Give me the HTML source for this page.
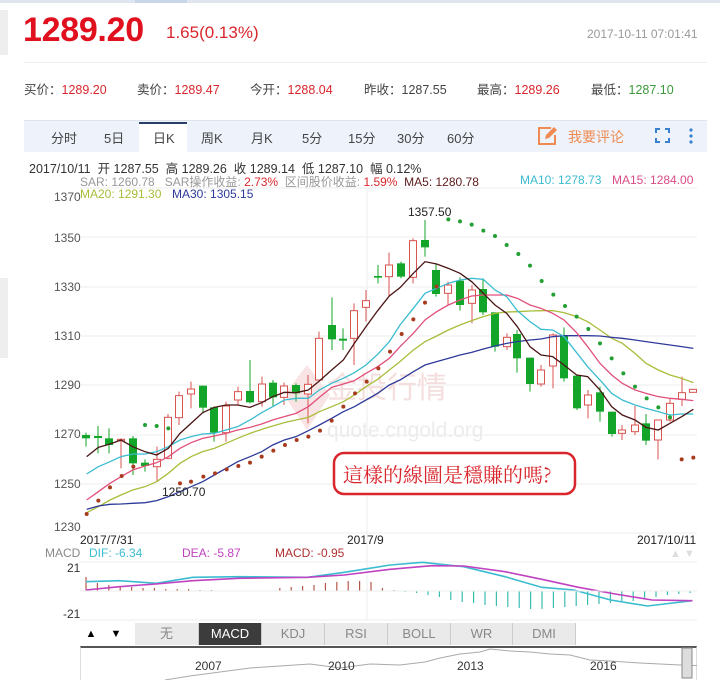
<!DOCTYPE html>
<html><head><meta charset="utf-8">
<style>
*{margin:0;padding:0;box-sizing:border-box}
body{width:720px;height:680px;background:#fff;font-family:"Liberation Sans","Noto Sans CJK SC",sans-serif;position:relative;overflow:hidden;color:#333}
.a{position:absolute;white-space:nowrap}
.r{color:#d9262c}.g{color:#3a9a3a}
.tab{position:absolute;top:128px;font-size:13px;color:#444}
.bt{position:absolute;top:623px;height:22px;width:46px;background:#eaeaea;border-right:1px solid #ccc;font-size:13px;color:#888;text-align:center;line-height:22px}
</style></head><body>
<div class="a" style="left:0;top:0;width:720px;height:3px;background:#dfe6f0"></div>
<div class="a" style="left:135px;top:0;width:52px;height:3px;background:#c8d6ea"></div>
<div class="a" style="left:0;top:10px;width:8px;height:45px;background:#eee"></div>
<div class="a" style="left:0;top:278px;width:8px;height:80px;background:#eee"></div>
<div class="a" style="left:23px;top:11px;font-size:34px;font-weight:bold;color:#e0101e;letter-spacing:-0.3px">1289.20</div>
<div class="a" style="left:166px;top:23px;font-size:17px;color:#d9262c">1.65(0.13%)</div>
<div class="a" style="left:587px;top:27px;font-size:12px;color:#999">2017-10-11 07:01:41</div>
<div class="a" style="left:24px;top:62px;width:683px;height:1px;background:#eee"></div>
<div class="a" style="left:24px;top:79px;font-size:12.5px;color:#444">买价：<span class="r">1289.20</span></div>
<div class="a" style="left:137px;top:79px;font-size:12.5px;color:#444">卖价：<span class="r">1289.47</span></div>
<div class="a" style="left:250px;top:79px;font-size:12.5px;color:#444">今开：<span class="r">1288.04</span></div>
<div class="a" style="left:364px;top:79px;font-size:12.5px;color:#444">昨收：1287.55</div>
<div class="a" style="left:477px;top:79px;font-size:12.5px;color:#444">最高：<span class="r">1289.26</span></div>
<div class="a" style="left:591px;top:79px;font-size:12.5px;color:#444">最低：<span class="g">1287.10</span></div>
<div class="a" style="left:24px;top:120px;width:683px;height:32px;background:#eef3fb;border-top:1px solid #dde4ef"></div>
<div class="a" style="left:139px;top:122px;width:48px;height:31px;background:#fff;border-top:2px solid #2a3f66"></div>
<div class="tab" style="left:51px">分时</div><div class="tab" style="left:104px">5日</div><div class="tab" style="left:153px">日K</div><div class="tab" style="left:201px">周K</div><div class="tab" style="left:251px">月K</div><div class="tab" style="left:302px">5分</div><div class="tab" style="left:348px">15分</div><div class="tab" style="left:397px">30分</div><div class="tab" style="left:447px">60分</div>
<svg class="a" style="left:537px;top:126px" width="22" height="20" viewBox="0 0 22 20"><path d="M14 2H2v16h16V9" fill="none" stroke="#ef8a52" stroke-width="2"/><path d="M8 13l1-4 8-8 3 3-8 8z" fill="#ef8a52"/></svg>
<div class="a" style="left:568px;top:127px;font-size:14px;color:#ef8a52">我要评论</div>
<svg class="a" style="left:655px;top:128px" width="15" height="15"><path d="M1 5V1h4M10 1h4v4M14 10v4h-4M5 14H1v-4" fill="none" stroke="#3a7fd0" stroke-width="2"/></svg>
<svg class="a" style="left:688px;top:127px" width="6" height="18"><circle cx="3" cy="3" r="1.6" fill="#3a7fd0"/><circle cx="3" cy="9" r="1.6" fill="#3a7fd0"/><circle cx="3" cy="15" r="1.6" fill="#3a7fd0"/></svg>
<div class="a" style="left:29px;top:158px;font-size:12.5px;color:#333">2017/10/11 &nbsp;开 1287.55 &nbsp;高 1289.26 &nbsp;收 1289.14 &nbsp;低 1287.10 &nbsp;幅 0.12%</div>
<div class="a" style="left:80px;top:173px;font-size:12px;color:#999">SAR: 1260.78 &nbsp;&nbsp;SAR操作收益: <span class="r">2.73%</span> &nbsp;区间股价收益: <span class="r">1.59%</span> &nbsp;<span style="color:#5a1a1a">MA5: 1280.78</span></div>
<div class="a" style="left:520px;top:173px;font-size:12px;color:#3bbcd0">MA10: 1278.73</div>
<div class="a" style="left:612px;top:173px;font-size:12px;color:#d94c86">MA15: 1284.00</div>
<div class="a" style="left:54px;top:190px;font-size:12px;color:#555">1370</div>
<div class="a" style="left:80px;top:187px;font-size:12px;color:#a8bd3a">MA20: 1291.30</div>
<div class="a" style="left:172px;top:187px;font-size:12px;color:#2d3a9a">MA30: 1305.15</div>
<div class="a" style="left:54px;top:231px;font-size:12px;color:#555">1350</div>
<div class="a" style="left:54px;top:280px;font-size:12px;color:#555">1330</div>
<div class="a" style="left:54px;top:329px;font-size:12px;color:#555">1310</div>
<div class="a" style="left:54px;top:378px;font-size:12px;color:#555">1290</div>
<div class="a" style="left:54px;top:427px;font-size:12px;color:#555">1270</div>
<div class="a" style="left:54px;top:477px;font-size:12px;color:#555">1250</div>
<div class="a" style="left:54px;top:520px;font-size:12px;color:#555">1230</div>
<svg class="a" style="left:0;top:0" width="720" height="680" id="sv">
<g stroke="#eee" stroke-width="1">
<line x1="80" y1="188" x2="697" y2="188"/><line x1="80" y1="237" x2="697" y2="237"/><line x1="80" y1="287" x2="697" y2="287"/><line x1="80" y1="336" x2="697" y2="336"/><line x1="80" y1="385" x2="697" y2="385"/><line x1="80" y1="435" x2="697" y2="435"/><line x1="80" y1="484" x2="697" y2="484"/><line x1="80" y1="533" x2="697" y2="533"/>
<line x1="367" y1="188" x2="367" y2="620"/>
<line x1="80" y1="562" x2="697" y2="562"/><line x1="80" y1="620" x2="697" y2="620"/>
</g>
<path d="M307 365 L330 395 L307 430 L284 395Z" fill="#f8e4e4"/>
<text x="327" y="398" font-size="30" fill="#f4dede" font-family="Noto Sans CJK SC,sans-serif">金投行情</text>
<text x="327" y="437" font-size="21" fill="#ececec" font-family="Liberation Sans,sans-serif">quote.cngold.org</text>
<g id="chart"></g>
<rect x="334" y="453" width="241" height="41" rx="10" fill="#fff" stroke="#d9262c" stroke-width="2.5"/>
<text x="343" y="482" font-size="20" fill="#d9262c" font-family="Noto Serif CJK SC,serif">這樣的線圖是穩賺的嗎?</text>
<text x="408" y="216" font-size="12" fill="#222">1357.50</text>
<text x="162" y="496" font-size="12" fill="#222">1250.70</text>
</svg>
<div class="a" style="left:80px;top:533px;font-size:12px;color:#222">2017/7/31</div>
<div class="a" style="left:347px;top:533px;font-size:12px;color:#222">2017/9</div>
<div class="a" style="left:637px;top:533px;font-size:12px;color:#222">2017/10/11</div>
<div class="a" style="left:45px;top:546px;font-size:12px;color:#888">MACD</div>
<div class="a" style="left:89px;top:546px;font-size:12px;color:#3bbcd0">DIF: -6.34</div>
<div class="a" style="left:182px;top:546px;font-size:12px;color:#c042c0">DEA: -5.87</div>
<div class="a" style="left:275px;top:546px;font-size:12px;color:#b03030">MACD: -0.95</div>
<div class="a" style="left:670px;top:548px;font-size:11px;color:#ddd">▲ ▼</div>
<div class="a" style="left:67px;top:561px;font-size:12px;color:#333">21</div>
<div class="a" style="left:63px;top:607px;font-size:12px;color:#333">-21</div>
<div class="a" style="left:80px;top:623px;width:22px;height:22px;background:#fff;font-size:11px;text-align:center;line-height:22px;color:#000">▲</div>
<div class="a" style="left:105px;top:623px;width:22px;height:22px;background:#fff;font-size:11px;text-align:center;line-height:22px;color:#000">▼</div>
<div class="bt" style="left:135px;width:64px">无</div>
<div class="bt" style="left:199px;width:63px;background:#3c3c3c;color:#fff">MACD</div>
<div class="bt" style="left:262px;width:63px">KDJ</div>
<div class="bt" style="left:325px;width:63px">RSI</div>
<div class="bt" style="left:388px;width:63px">BOLL</div>
<div class="bt" style="left:451px;width:62px">WR</div>
<div class="bt" style="left:513px;width:63px">DMI</div>
<div class="a" style="left:80px;top:646px;width:617px;height:34px;border-top:2px solid #555;border-left:1px solid #ddd;border-right:1px solid #ddd;background:#fff"></div>
<svg class="a" style="left:80px;top:646px" width="617" height="34">
<polyline fill="none" stroke="#aaa" stroke-width="1" points="85,34 110,30 140,26 170,22 200,20 230,18 260,22 290,18 320,19 345,16 360,12 380,8 400,6 410,3 430,5 450,6 470,8 490,9 510,14 530,15 560,17 600,19 630,20 660,18 700,16 720,17 750,14 770,12 800,12 830,13 870,15 910,15 940,16 960,16"/>
<g font-size="12" fill="#333"><text x="115" y="24">2007</text><text x="248" y="24">2010</text><text x="377" y="24">2013</text><text x="510" y="24">2016</text></g>
<rect x="602" y="2" width="10" height="30" fill="#ddd" stroke="#888"/>
</svg>
<script>
var NS="http://www.w3.org/2000/svg",G=document.getElementById("chart");
function el(t,a){var e=document.createElementNS(NS,t);for(var k in a)e.setAttribute(k,a[k]);G.appendChild(e);return e}
var Y=function(z){return 190+z/3};
var C=[[86,735,745,728,770,0],[98,738,744,708,790,0],[109,745,765,715,790,0],[121,748,752,745,835,1],[133,745,820,738,855,0],[145,818,828,808,845,0],[157,808,830,770,875,1],[168,682,805,672,808,1],[179,617,683,605,705,1],[191,597,612,575,655,1],[203,587,653,587,670,0],[214,652,728,650,755,0],[226,648,728,635,755,1],[238,605,630,590,645,1],[250,603,637,510,640,0],[262,582,635,560,650,1],[273,578,622,570,650,0],[284,588,622,578,645,1],[296,585,610,580,635,0],[308,583,612,555,700,1],[319,445,570,425,575,1],[332,405,448,322,480,0],[343,446,452,415,480,0],[354,362,445,340,525,1],[366,332,352,300,395,1],[378,258,263,225,280,0],[389,225,260,188,318,1],[401,220,260,215,265,0],[413,152,262,145,280,1],[425,150,172,90,200,0],[436,240,312,220,320,0],[448,285,310,275,345,1],[460,272,345,262,362,0],[472,300,340,285,400,1],[483,297,367,265,375,0],[495,367,470,367,485,0],[507,442,470,430,480,1],[517,432,505,420,548,0],[530,503,582,503,605,0],[541,540,582,525,590,1],[553,435,528,430,595,1],[564,437,565,412,575,0],[577,557,655,557,660,0],[588,615,645,600,685,1],[600,607,665,590,695,0],[612,665,732,665,740,0],[622,720,730,705,750,1],[635,705,725,648,735,1],[646,700,752,672,765,0],[658,690,750,690,808,1],[670,640,690,625,695,1],[682,608,628,560,648,1],[693,598,607,598,607,1]];
C.forEach(function(c){var col=c[5]?"#d9534f":"#13a52a";
el("line",{x1:c[0],x2:c[0],y1:Y(c[3]),y2:Y(c[4]),stroke:col,"stroke-width":1});
var h=Math.max(1.5,(c[2]-c[1])/3);
if(c[5])el("rect",{x:c[0]-3.5,y:Y(c[1]),width:7,height:h,fill:"#fff",stroke:col,"stroke-width":1});
else el("rect",{x:c[0]-4,y:Y(c[1]),width:8,height:h,fill:col});});
function line(l,r,col){var p=l.map(function(q){return (80+q[0]/3)+","+Y(q[1])}).concat(r.map(function(q){return (390+q[0]/3)+","+Y(q[1])}));el("polyline",{points:p.join(" "),fill:"none",stroke:col,"stroke-width":1.3});}
line([[20,968],[55,950],[90,930],[123,915],[158,900],[195,890],[230,875],[265,850],[300,820],[333,800],[368,785],[403,775],[438,760],[473,745],[510,730],[545,718],[578,708],[613,698],[648,690],[685,682],[718,665],[755,650],[790,635],[823,615],[858,590],[893,568],[928,540],[960,515]],[[70,480],[105,455],[140,438],[175,420],[210,405],[245,392],[280,380],[315,370],[350,366],[382,365],[420,363],[453,362],[488,362],[522,368],[560,380],[593,395],[630,420],[665,445],[697,460],[735,490],[768,520],[805,540],[840,555],[875,565],[910,578]],"#a8bd3a");
line([[20,958],[55,948],[90,943],[123,942],[158,940],[195,938],[230,932],[265,920],[300,905],[333,890],[368,875],[403,855],[438,835],[473,815],[510,800],[545,785],[578,765],[613,750],[648,740],[685,722],[718,705],[755,685],[790,665],[823,650],[858,630],[893,610],[928,585],[960,570]],[[70,545],[105,525],[140,515],[175,505],[210,495],[245,487],[280,477],[315,468],[350,460],[382,455],[420,450],[453,447],[488,440],[522,437],[560,437],[593,437],[630,438],[665,442],[697,445],[735,450],[768,455],[805,460],[840,465],[875,470],[910,475]],"#2d3a9a");
line([[20,930],[55,905],[90,880],[123,860],[158,840],[195,828],[230,818],[265,800],[300,775],[333,758],[368,745],[403,738],[438,730],[473,720],[510,712],[545,702],[578,690],[613,680],[648,670],[685,650],[718,622],[755,592],[790,582],[823,572],[858,550],[893,530],[928,505],[960,470]],[[70,430],[105,390],[140,365],[175,345],[210,330],[245,318],[280,315],[315,315],[350,315],[382,325],[420,345],[453,355],[488,370],[522,390],[560,428],[593,470],[630,520],[665,555],[697,580],[735,600],[768,610],[805,620],[840,625],[875,628],[910,632]],"#e0507a");
line([[20,852],[55,830],[90,815],[123,800],[158,792],[195,792],[230,785],[265,770],[300,750],[333,740],[368,732],[403,730],[438,720],[473,710],[510,690],[545,668],[578,650],[613,630],[648,625],[685,625],[718,600],[755,580],[790,565],[823,548],[858,525],[893,493],[928,455],[960,405]],[[70,355],[105,310],[140,295],[175,280],[210,270],[245,265],[280,268],[315,300],[350,320],[382,362],[420,395],[453,418],[488,420],[522,440],[560,488],[593,530],[630,570],[665,610],[697,630],[735,645],[768,655],[805,665],[840,675],[875,672],[910,672]],"#3bbcd0");
line([[20,800],[55,772],[90,762],[123,750],[158,770],[195,785],[230,795],[265,775],[300,730],[333,700],[368,668],[403,652],[438,645],[473,645],[510,652],[545,638],[578,620],[613,607],[648,608],[685,600],[718,573],[755,540],[790,510],[823,460],[858,410],[893,362],[928,318],[960,293]],[[70,250],[105,215],[140,222],[175,235],[210,250],[245,275],[280,310],[315,345],[350,370],[382,410],[420,470],[453,495],[488,500],[522,525],[560,555],[593,560],[630,600],[665,650],[697,675],[735,690],[768,712],[805,720],[840,700],[875,680],[910,658]],"#4a1515");
var RD=[[20,972],[55,932],[90,892],[125,858],[160,830],[300,880],[333,875],[370,860],[405,850],[440,838],[475,828],[510,818],[545,800],[580,782],[615,765],[650,750],[685,740],[720,722],[755,692],[790,650],[825,610],[860,575],[895,535],[930,485]];
RD.forEach(function(d){el("circle",{cx:80+d[0]/3,cy:Y(d[1]),r:2,fill:"#a83a1e"})});
[[195,705],[230,708],[265,715]].forEach(function(d){el("circle",{cx:80+d[0]/3,cy:Y(d[1]),r:2,fill:"#22a033"})});
[[35,432],[70,388],[105,338],[140,290],[875,808],[910,803]].forEach(function(d){el("circle",{cx:390+d[0]/3,cy:Y(d[1]),r:2,fill:"#a83a1e"})});
[[175,88],[210,94],[245,104],[280,122],[315,138],[350,165],[385,192],[420,227],[455,273],[490,314],[525,348],[560,380],[595,417],[630,460],[665,505],[700,550],[735,590],[770,625],[805,652],[840,682]].forEach(function(d){el("circle",{cx:390+d[0]/3,cy:Y(d[1]),r:2,fill:"#22a033"})});
var H=[14,8,6,5,4,3,3,2,2,2,1,1,0,0,0,0,0,3,4,5,6,8,9,10,10,9,3,1,-1,-2,-4,-6,-9,-11,-12,-14,-15,-16,-17,-18,-18,-17,-16,-15,-14,-13,-12,-11,-10,-8,-6,-4,-3,-2];
H.forEach(function(h,i){if(!h)return;var x=86+i*11.4;el("line",{x1:x,x2:x,y1:591,y2:591-h,stroke:h>0?"#b5584a":"#3bbcb0","stroke-width":1.2})});
function ml(pts,col){el("polyline",{points:pts.map(function(p){return (p[0]/2.178)+","+(530+p[1]/3)}).join(" "),fill:"none",stroke:col,"stroke-width":1.6})}
ml([[187,155],[260,152],[340,160],[420,142],[520,140],[670,142],[750,127],[850,105],[920,97],[1010,110],[1100,140],[1180,172],[1250,180],[1330,210],[1410,228],[1508,212]],"#3bbcd0");
ml([[187,180],[260,170],[340,162],[420,152],[520,145],[670,142],[750,135],[850,118],[940,107],[1010,108],[1100,125],[1180,148],[1260,172],[1340,192],[1420,210],[1508,212]],"#c042c0");
el("line",{x1:80,x2:697,y1:591,y2:591,stroke:"#eee"});
</script>
</body></html>
